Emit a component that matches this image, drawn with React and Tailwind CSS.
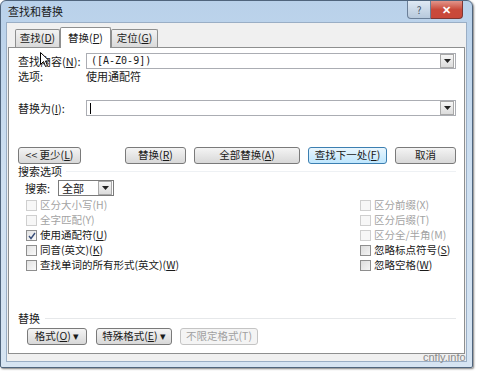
import React from "react";

const F = { fontFamily: '"Noto Sans CJK SC", "Noto Sans", sans-serif' };

function U({ children }) {
  return <span className="underline underline-offset-1">{children}</span>;
}

function Arrow() {
  return (
    <div className="w-[14px] h-[14px] border border-[#a8a8a8] bg-gradient-to-b from-[#f6f6f6] to-[#dcdcdc] flex items-center justify-center">
      <svg width="7" height="4" viewBox="0 0 7 4"><path d="M0 0h7L3.5 4z" fill="#222" /></svg>
    </div>
  );
}

function Btn({ children, w, focus, disabled, ml = 0 }) {
  const base = focus
    ? "border-[#3c7fb1] from-[#eaf6fd] to-[#bee6fd]"
    : disabled
    ? "border-[#c4c4c4] from-[#f4f4f4] to-[#f4f4f4] text-[#a0a0a0]"
    : "border-[#7a7a7a] from-[#f4f4f4] to-[#d8d8d8]";
  return (
    <div
      className={`h-[17px] rounded-[3px] border bg-gradient-to-b ${base} flex items-center justify-center text-[10.5px] leading-none shrink-0`}
      style={{ width: w, marginLeft: ml }}
    >
      {children}
    </div>
  );
}

function Check({ label, disabled, checked, soft }) {
  return (
    <div className={`h-[15px] flex items-center gap-[3px] ${disabled ? "text-[#a3a3a3]" : "text-[#1a1a1a]"}`}>
      <div
        className={`w-[11px] h-[11px] border flex items-center justify-center ${
          disabled ? "border-[#cfcfcf] bg-[#f7f7f7]" : soft ? "border-[#8e8e8e] bg-gradient-to-br from-[#dcdcdc] to-[#f4f4f4]" : "border-[#8e8e8e] bg-gradient-to-br from-[#e2e2e2] to-[#fafafa]"
        }`}
      >
        {checked && (
          <svg width="8" height="8" viewBox="0 0 8 8"><path d="M1 4l2 2.5L7 1" fill="none" stroke="#3a4f7a" strokeWidth="1.4" /></svg>
        )}
      </div>
      <span className="text-[10.5px] leading-none">{label}</span>
    </div>
  );
}

export default function App() {
  return (
    <div className="w-[479px] h-[371px] bg-white relative overflow-hidden text-[#1a1a1a]" style={F}>
      <div className="w-[473px] h-[368px] rounded-t-[6px] rounded-b-[2px] border border-[#50657d] bg-gradient-to-b from-[#b9d1ea] via-[#cfe0f1] to-[#d6e4f2] flex flex-col shadow-[1px_1px_2px_rgba(0,0,0,0.5)]">
        {/* title bar */}
        <div className="h-[21px] flex items-start justify-between pl-[7px] pr-[9px] shrink-0">
          <span className="text-[11px] leading-none mt-[5px] text-[#1a1a1a]">查找和替换</span>
          <div className="flex h-[18px]">
            <div className="w-[24px] h-[18px] rounded-bl-[4px] border border-[#6b7f98] border-t-0 bg-gradient-to-b from-[#dfe9f4] to-[#b7c9dc] flex items-center justify-center text-[10px] text-[#3f4f63] leading-none">?</div>
            <div className="w-[32px] h-[18px] rounded-br-[4px] border border-[#7d3633] border-t-0 border-l-0 bg-gradient-to-b from-[#e2948a] via-[#c94a3b] to-[#c9483a] flex items-center justify-center text-white text-[11px] leading-none font-bold">✕</div>
          </div>
        </div>
        {/* client */}
        <div className="flex-1 mx-[5px] mb-[5px] bg-[#f0f0f0] border border-[#9aaec5] flex flex-col pl-[1px] pr-[1px] pb-[7px] relative">
          {/* tabs */}
          <div className="h-[24px] flex items-end pl-[7px] shrink-0">
            <div className="h-[18px] w-[45px] border border-[#8e8f8f] border-b-0 rounded-t-[2px] bg-gradient-to-b from-[#f2f2f2] to-[#dadada] flex items-center justify-center text-[10.5px] leading-none mb-0">查找(<U>D</U>)</div>
            <div className="h-[21px] w-[51px] border border-[#8e8f8f] border-b-0 rounded-t-[2px] bg-white flex items-center justify-center text-[10.5px] leading-none -mb-[1px] relative z-10">替换(<U>P</U>)</div>
            <div className="h-[18px] w-[47px] border border-[#8e8f8f] border-b-0 rounded-t-[2px] bg-gradient-to-b from-[#f2f2f2] to-[#dadada] flex items-center justify-center text-[10.5px] leading-none">定位(<U>G</U>)</div>
          </div>
          {/* panel */}
          <div className="flex-1 border border-[#8e8f8f] bg-white flex flex-col pl-[9px] pr-[8px]">
            <div className="flex items-center mt-[5px] h-[16px]">
              <span className="w-[68px] text-[11px] leading-none">查找内容(<U>N</U>):</span>
              <div className="flex-1 h-[16px] border border-[#abadb3] flex items-center justify-between pl-[4px] pr-[1px]">
                <span className="text-[10px] leading-none" style={{ fontFamily: '"DejaVu Sans Mono", monospace' }}>([A-Z0-9])</span>
                <Arrow />
              </div>
            </div>
            <div className="flex items-center h-[13px] mt-[1px]">
              <span className="w-[68px] text-[11px] leading-none">选项:</span>
              <span className="text-[11px] leading-none">使用通配符</span>
            </div>
            <div className="flex items-center mt-[17px] h-[16px]">
              <span className="w-[68px] text-[11px] leading-none">替换为(<U>I</U>):</span>
              <div className="flex-1 h-[16px] border border-[#abadb3] flex items-center justify-between pl-[3px] pr-[1px]">
                <div className="w-[1px] h-[11px] bg-black" />
                <Arrow />
              </div>
            </div>
            <div className="flex items-center mt-[31px] h-[17px]">
              <Btn w={63}>&lt;&lt; 更少(<U>L</U>)</Btn>
              <Btn w={61} ml={44}>替换(<U>R</U>)</Btn>
              <Btn w={106} ml={8}>全部替换(<U>A</U>)</Btn>
              <Btn w={79} ml={8} focus>查找下一处(<U>F</U>)</Btn>
              <Btn w={61} ml={8}>取消</Btn>
            </div>
            <div className="flex items-center h-[12px] mt-[1px] gap-[4px]">
              <span className="text-[11px] leading-none">搜索选项</span>
              <div className="flex-1 h-[1px] bg-[#eef1f4]" />
            </div>
            <div className="flex items-center h-[16px] mt-[3px] pl-[7px]">
              <span className="w-[33px] text-[11px] leading-none">搜索:</span>
              <div className="w-[56px] h-[16px] border border-[#7a7a7a] flex items-center justify-between pl-[3px] pr-[1px]">
                <span className="text-[11px] leading-none">全部</span>
                <Arrow />
              </div>
            </div>
            <div className="flex justify-between mt-[2px] pl-[8px] pr-[0px]">
              <div className="flex flex-col">
                <Check label={<>区分大小写(H)</>} disabled />
                <Check label={<>全字匹配(Y)</>} disabled />
                <Check label={<>使用通配符(<U>U</U>)</>} checked />
                <Check label={<>同音(英文)(<U>K</U>)</>} />
                <Check label={<>查找单词的所有形式(英文)(<U>W</U>)</>} />
              </div>
              <div className="flex flex-col w-[96px]">
                <Check label={<>区分前缀(X)</>} disabled />
                <Check label={<>区分后缀(T)</>} disabled />
                <Check label={<>区分全/半角(M)</>} disabled />
                <Check label={<>忽略标点符号(<U>S</U>)</>} soft />
                <Check label={<>忽略空格(<U>W</U>)</>} soft />
              </div>
            </div>
            <div className="flex items-center h-[12px] mt-[39px] gap-[5px]">
              <span className="text-[11px] leading-none">替换</span>
              <div className="flex-1 h-[1px] bg-[#e6e8ea]" />
            </div>
            <div className="flex items-center mt-[4px] h-[17px] pl-[9px]">
              <Btn w={60}>格式(<U>O</U>) ▾</Btn>
              <Btn w={76} ml={9}>特殊格式(<U>E</U>) ▾</Btn>
              <Btn w={78} ml={8} disabled>不限定格式(T)</Btn>
            </div>
          </div>
        </div>
      </div>
      {/* mouse cursor */}
      <svg className="absolute left-[40px] top-[52px]" width="10" height="16" viewBox="0 0 10 16">
        <path d="M0.5 0.5v12l3-3 2 5 2-1-2-4.5h4z" fill="#fff" stroke="#000" strokeWidth="1" />
      </svg>
      <span className="absolute left-[423px] top-[352px] text-[11px] leading-none text-[#8a8a8a]" style={{ fontFamily: '"Liberation Sans", sans-serif' }}>cnfly.info</span>
    </div>
  );
}
